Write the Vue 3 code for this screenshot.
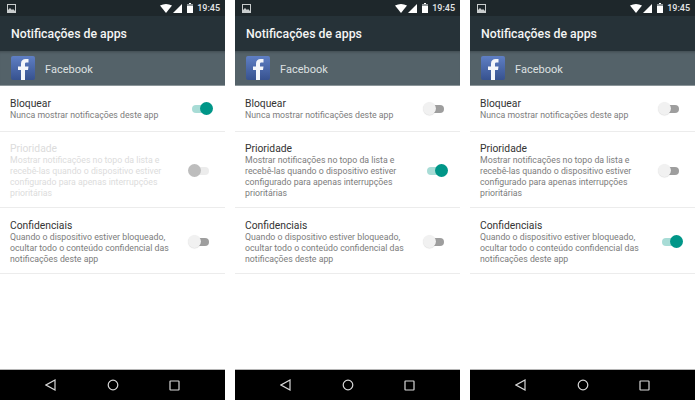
<script setup>
const rows = [
  { title: 'Bloquear', text: ['Nunca mostrar notificações deste app'], cls: 'r1' },
  { title: 'Prioridade', text: ['Mostrar notificações no topo da lista e', 'recebê-las quando o dispositivo estiver', 'configurado para apenas interrupções', 'prioritárias'], cls: 'r2' },
  { title: 'Confidenciais', text: ['Quando o dispositivo estiver bloqueado,', 'ocultar todo o conteúdo confidencial das', 'notificações deste app'], cls: 'r3' },
]
const phones = [
  { states: ['on', 'disabled', 'off'] },
  { states: ['off', 'on', 'off'] },
  { states: ['off', 'off', 'on'] },
]
</script>

<template>
  <div class="page">
    <div v-for="(p, pi) in phones" :key="pi" class="phone">
      <div class="status">
        <svg class="pic" width="9" height="9" viewBox="0 0 9 9">
          <rect x="0.5" y="0.5" width="8" height="8" fill="none" stroke="#c9cdce" stroke-width="1" />
          <path d="M1 8V6l2-2 2 2 1-1 2 2v1z" fill="#c9cdce" />
        </svg>
        <span class="grow"></span>
        <svg width="12" height="9" viewBox="0 0 12 9"><path d="M0 1.500Q6-1.500 12 1.500L6 9z" fill="#fff" /></svg>
        <svg class="sig" width="9" height="9" viewBox="0 0 9 9"><path d="M0 9L9 0V9z" fill="#fff" /></svg>
        <svg class="bat" width="6" height="10" viewBox="0 0 6 10"><path d="M2 0h2v1h2v9H0V1h2z" fill="#fff" /><path d="M0 1h6v2H0z" fill="#8e9598" /></svg>
        <span class="time">19:45</span>
      </div>
      <div class="head">Notificações de apps</div>
      <div class="app">
        <svg class="fb" width="24" height="24" viewBox="0 0 24 24">
          <defs>
            <linearGradient :id="'g' + pi" x1="0" y1="0" x2="0" y2="1">
              <stop offset="0" stop-color="#5f7fc4" />
              <stop offset="1" stop-color="#37528f" />
            </linearGradient>
          </defs>
          <rect width="24" height="24" rx="2" :fill="'url(#g' + pi + ')'" />
          <path d="M10 24V14H7V10.500H10V7.500C10 4.500 12 3 14.500 3H17.500V6.500H15.500C14.300 6.500 14 7 14 8V10.500H17.500L17 14H14V24z" fill="#f4f6fa" />
        </svg>
        <span class="app-name">Facebook</span>
      </div>
      <div v-for="(r, i) in rows" :key="i" class="row" :class="[r.cls, { dim: p.states[i] === 'disabled' }]">
        <div class="copy">
          <div class="title">{{ r.title }}</div>
          <div v-for="l in r.text" :key="l" class="line">{{ l }}</div>
        </div>
        <div class="switch" :class="p.states[i]"><i></i><b></b></div>
      </div>
      <div class="grow"></div>
      <div class="nav">
        <svg width="11" height="12" viewBox="0 0 11 12"><path d="M10 1L1 6l9 5z" fill="none" stroke="#d8d8d8" stroke-width="1.200" /></svg>
        <svg width="12" height="12" viewBox="0 0 12 12"><circle cx="6" cy="6" r="4.800" fill="none" stroke="#d8d8d8" stroke-width="1.200" /></svg>
        <svg width="11" height="11" viewBox="0 0 11 11"><rect x="1" y="1" width="9" height="9" rx="0.500" fill="none" stroke="#d8d8d8" stroke-width="1.200" /></svg>
      </div>
    </div>
  </div>
</template>

<style>
html, body { margin: 0; background: #fff; }
</style>

<style scoped>
.page {
  display: flex;
  gap: 10px;
  width: 695px;
  height: 400px;
  overflow: hidden;
  font-family: Roboto, "Liberation Sans", sans-serif;
}
.phone {
  width: 225px;
  height: 400px;
  display: flex;
  flex-direction: column;
  background: #fff;
}
.grow { flex: 1; }
.status {
  height: 16px;
  background: #1e272b;
  display: flex;
  align-items: center;
  padding: 0 5px 0 7px;
  box-sizing: border-box;
  color: #e4e6e7;
}
.sig { margin-left: 1px; margin-right: 5px; }
.bat { margin-right: 4px; }
.time { font-size: 9px; font-weight: 500; line-height: 16px; }
.head {
  height: 35px;
  background: #263238;
  box-sizing: border-box;
  padding: 1px 0 0 11px;
  line-height: 35px;
  color: #f4f5f5;
  font-size: 12.300px;
  font-weight: 500;
}
.app {
  height: 34px;
  background: #546269;
  box-shadow: inset 0 3px 3px -2px rgba(0,0,0,.25);
  display: flex;
  align-items: center;
  padding-left: 11px;
  gap: 10px;
  font-size: 11px;
  color: #dde0e1;
  border-bottom: 1px solid #8b9599;
}
.app-name { padding-top: 2px; }
.fb { flex: none; }
.row {
  display: flex;
  align-items: center;
  justify-content: space-between;
  box-sizing: border-box;
  padding: 0 11px 0 10px;
  border-bottom: 1px solid #ececec;
}
.r1 { height: 46px; }
.r2 { height: 76px; padding-top: 2px; }
.r3 { height: 66px; padding-top: 2px; }
.title { font-size: 10.300px; line-height: 13px; color: #333; }
.line { font-size: 8.750px; line-height: 11px; color: #7c7c7c; white-space: nowrap; }
.dim .title, .dim .line { color: #dcdcdc; }
.switch { position: relative; width: 22px; height: 14px; flex: none; }
.switch i { position: absolute; left: 2px; right: 0; top: 3px; height: 8px; border-radius: 4px; background: #9e9e9e; }
.switch b { position: absolute; top: 0; width: 13px; height: 13px; border-radius: 50%; }
.on { margin-right: 2px; }
.on i { background: #a8dcd6; }
.on b { right: -1px; background: #009688; }
.off { margin-right: 5px; }
.off b { left: 1px; background: #f1f1f1; box-shadow: 0 0.500px 1px rgba(0,0,0,.15); }
.disabled { margin-right: 5px; }
.disabled i { background: #ececec; }
.disabled b { left: 1px; background: #bdbdbd; }
.nav {
  height: 31px;
  background: #000;
  border-top: 1px solid #b5b5b5;
  box-sizing: border-box;
  display: flex;
  align-items: center;
  justify-content: center;
  gap: 50.500px;
}
</style>
